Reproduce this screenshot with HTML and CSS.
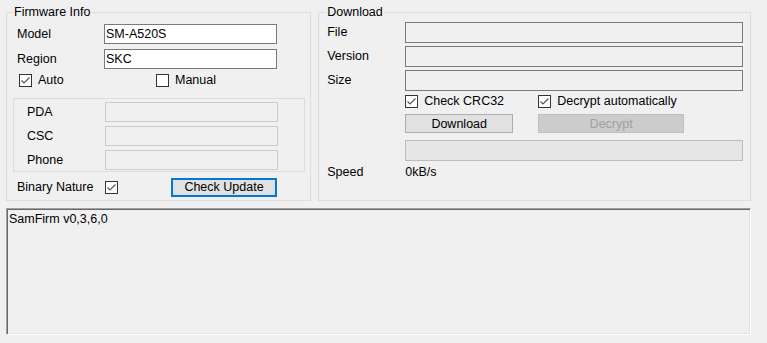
FILE: index.html
```html
<!DOCTYPE html>
<html>
<head>
  <title>SamFirm</title>
  <link rel="stylesheet" href="styles.css">
</head>
<body>
  <div class="window">
    <div class="top">
      <!-- Firmware Info -->
      <fieldset class="group firmware">
        <legend>Firmware Info</legend>
        <div class="form">
          <label>Model</label>
          <input class="field" type="text" value="SM-A520S">
          <label>Region</label>
          <input class="field" type="text" value="SKC">
        </div>
        <div class="options">
          <span class="option auto">
            <span class="check"><svg width="11" height="11" viewBox="0 0 11 11"><polyline points="1.5,5.5 4,8 9.5,2.5" fill="none" stroke="#555" stroke-width="1.2"/></svg></span>
            Auto
          </span>
          <span class="option">
            <span class="check"></span>
            Manual
          </span>
        </div>
        <fieldset class="sub">
          <div class="sub-form">
            <label>PDA</label>
            <div class="field disabled"></div>
            <label>CSC</label>
            <div class="field disabled"></div>
            <label>Phone</label>
            <div class="field disabled"></div>
          </div>
        </fieldset>
        <div class="binary-row">
          <label class="binary-label">Binary Nature</label>
          <span class="check"><svg width="11" height="11" viewBox="0 0 11 11"><polyline points="1.5,5.5 4,8 9.5,2.5" fill="none" stroke="#555" stroke-width="1.2"/></svg></span>
          <button class="button default-button">Check Update</button>
        </div>
      </fieldset>

      <!-- Download -->
      <fieldset class="group download">
        <legend>Download</legend>
        <div class="dl-form">
          <label>File</label>
          <div class="field readonly"></div>
          <label>Version</label>
          <div class="field readonly"></div>
          <label>Size</label>
          <div class="field readonly"></div>
        </div>
        <div class="dl-options">
          <span class="option crc">
            <span class="check"><svg width="11" height="11" viewBox="0 0 11 11"><polyline points="1.5,5.5 4,8 9.5,2.5" fill="none" stroke="#555" stroke-width="1.2"/></svg></span>
            Check CRC32
          </span>
          <span class="option">
            <span class="check"><svg width="11" height="11" viewBox="0 0 11 11"><polyline points="1.5,5.5 4,8 9.5,2.5" fill="none" stroke="#555" stroke-width="1.2"/></svg></span>
            Decrypt automatically
          </span>
        </div>
        <div class="dl-buttons">
          <button class="button download-button">Download</button>
          <button class="button decrypt-button" disabled>Decrypt</button>
        </div>
        <div class="progress-bar"></div>
        <div class="speed-row">
          <label>Speed</label>
          <span>0kB/s</span>
        </div>
      </fieldset>
    </div>

    <!-- Log -->
    <div class="log">SamFirm v0,3,6,0</div>
  </div>
</body>
</html>
```

FILE: styles.css
```css
body {
  margin: 0;
  padding: 0;
  background: #f0f0f0;
  font-family: "Liberation Sans", Arial, sans-serif;
  font-size: 12.5px;
  color: #000;
}

.window {
  padding: 4px 0 0 6px;
  width: 745px;
}

.top {
  display: flex;
  gap: 7px;
}

.group {
  margin: 0;
  padding: 0;
  min-width: 0;
  border: 1px solid #dcdcdc;
  box-sizing: border-box;
}

.group legend {
  padding: 0 1px;
  line-height: 16px;
}

.firmware {
  width: 306px;
  padding: 0 0 4px 10px;
}

.firmware legend {
  margin-left: -4px;
}

.download {
  width: 434px;
  padding: 0 0 0 8px;
}

.download legend {
  margin-left: -1px;
}

label {
  line-height: 15px;
}

.field {
  box-sizing: border-box;
  border: 1px solid #7a7a7a;
  background: #fff;
  font-family: inherit;
  font-size: inherit;
  padding: 0 1px;
  margin: 0;
  outline: none;
}

.field.disabled {
  border-color: #cccccc;
  background: #f0f0f0;
}

.field.readonly {
  background: #f0f0f0;
}

.form {
  display: grid;
  grid-template-columns: 87px 173px;
  grid-auto-rows: 20px;
  row-gap: 5px;
  align-items: center;
  margin-top: 4px;
}

.form .field {
  height: 20px;
}

.options {
  display: flex;
  margin-top: 4px;
  padding-left: 2px;
  height: 15px;
  align-items: center;
}

.option {
  display: flex;
  align-items: center;
  gap: 6px;
  line-height: 15px;
}

.auto {
  width: 137px;
}

.check {
  display: inline-flex;
  align-items: center;
  justify-content: center;
  width: 13px;
  height: 13px;
  box-sizing: border-box;
  border: 1px solid #333;
  background: #fff;
  flex: none;
}

.sub {
  margin: 10px 5px 0 -4px;
  padding: 3px 0 1px 13px;
  border: 1px solid #dcdcdc;
  min-width: 0;
}

.sub-form {
  display: grid;
  grid-template-columns: 78px 173px;
  grid-auto-rows: 20px;
  row-gap: 4px;
  align-items: center;
}

.sub-form .field {
  height: 20px;
}

.binary-row {
  display: flex;
  align-items: center;
  margin-top: 6px;
  height: 18px;
}

.binary-label {
  width: 88px;
}

.button {
  box-sizing: border-box;
  font-family: inherit;
  font-size: inherit;
  background: #e1e1e1;
  border: 1px solid #adadad;
  color: #000;
  padding: 0;
  margin: 0;
}

.default-button {
  margin-left: 53px;
  width: 106px;
  height: 19px;
  border: 2px solid #0078d7;
}

.dl-form {
  display: grid;
  grid-template-columns: 78px 338px;
  grid-auto-rows: 21px;
  row-gap: 3px;
  align-items: center;
  margin-top: 2px;
}

.dl-form .field {
  height: 21px;
}

.dl-options {
  display: flex;
  margin: 3px 0 0 78px;
  height: 15px;
  align-items: center;
}

.crc {
  width: 133px;
}

.dl-buttons {
  display: flex;
  margin: 5px 0 0 78px;
  gap: 25px;
}

.download-button {
  width: 108px;
  height: 19px;
}

.decrypt-button {
  width: 146px;
  height: 19px;
  background: #cccccc;
  border-color: #bfbfbf;
  color: #a0a0a0;
}

.progress-bar {
  box-sizing: border-box;
  margin: 7px 0 0 78px;
  width: 338px;
  height: 21px;
  background: #e6e6e6;
  border: 1px solid #bcbcbc;
}

.speed-row {
  display: flex;
  margin-top: 4px;
  line-height: 15px;
}

.speed-row label {
  width: 78px;
}

.log {
  box-sizing: border-box;
  margin-top: 7px;
  width: 745px;
  height: 127px;
  padding: 3px 2px;
  line-height: 15px;
  border: 1px solid;
  border-color: #a0a0a0 #ffffff #ffffff #a0a0a0;
  box-shadow: inset 1px 1px 0 #696969, inset -1px -1px 0 #e3e3e3;
}
```
